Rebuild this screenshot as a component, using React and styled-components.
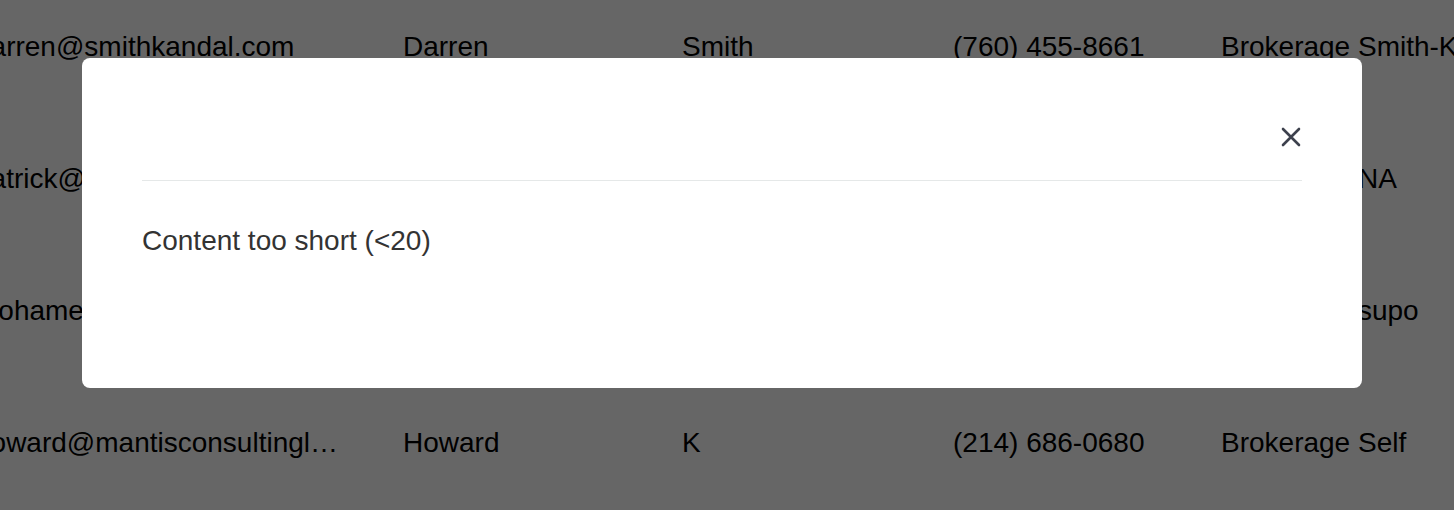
import React from "react";
import styled, { createGlobalStyle } from "styled-components";

const GlobalStyle = createGlobalStyle`
    html, body {
        margin: 0;
        padding: 0;
        background: #ffffff;
        overflow: hidden;
    }
    body {
        font-family: "Liberation Sans", Arial, Helvetica, sans-serif;
    }
`;

const Page = styled.div`
    width: 1454px;
    height: 510px;
    overflow: hidden;
`;

const Table = styled.div`
    display: grid;
    grid-template-columns: 363px 214px 206px 203px 320px;
    grid-auto-rows: 132px;
    column-gap: 65px;
    align-items: center;
    margin: -19px 0 0 -25px;
    color: #000000;
    font-size: 28px;
`;

const Cell = styled.div`
    white-space: nowrap;
    overflow: hidden;
    text-overflow: ${({ $clip }) => ($clip ? "clip" : "ellipsis")};
    margin-right: ${({ $wide }) => ($wide ? "-3px" : "0")};
`;

const Overlay = styled.div`
    position: fixed;
    inset: 0;
    background: rgba(0, 0, 0, 0.6);
    display: flex;
    align-items: flex-start;
    padding: 58px 0 0 82px;
`;

const Modal = styled.div`
    width: 1280px;
    height: 330px;
    box-sizing: border-box;
    background: #ffffff;
    border-radius: 8px;
    padding: 0 60px;
`;

const Header = styled.div`
    display: flex;
    justify-content: flex-end;
    align-items: center;
    padding: 69px 0 33px;
    border-bottom: 1px solid #e5e8e8;
`;

const CloseButton = styled.button`
    display: flex;
    width: 20px;
    height: 20px;
    margin-right: 1px;
    padding: 0;
    border: 0;
    background: none;
    color: #3d414d;
    cursor: pointer;
`;

const Body = styled.div`
    padding-top: 43px;
    font-size: 28px;
    line-height: 1.2;
    color: #333333;
`;

const rows = [
    ["darren@smithkandal.com", "Darren", "Smith", "(760) 455-8661", "Brokerage Smith-Kandal"],
    ["patrick@pmrealtygroup.com", "Patrick", "Morales", "(619) 302-4417", "Brokerage NA"],
    ["mohamed@elmasriproperties.com", "Mohamed", "Elmasri", "(858) 771-2093", "Brokerage  supo"],
    ["howard@mantisconsultinglimited.com", "Howard", "K", "(214) 686-0680", "Brokerage Self"],
];

export default function App() {
    return (
        <Page>
            <GlobalStyle />

            {/* TABLE BEHIND THE DIALOG */}
            <Table>
                {rows.map((row) =>
                    row.map((value, i) => (
                        <Cell key={row[0] + i} $wide={i === 0} $clip={i === 4}>
                            {value}
                        </Cell>
                    ))
                )}
            </Table>

            {/* DIALOG */}
            <Overlay>
                <Modal>
                    <Header>
                        <CloseButton aria-label="Close">
                            <svg width="20" height="20" viewBox="0 0 20 20" fill="none">
                                <path
                                    d="M2 2L18 18M18 2L2 18"
                                    stroke="currentColor"
                                    strokeWidth="2.6"
                                    strokeLinecap="round"
                                />
                            </svg>
                        </CloseButton>
                    </Header>
                    <Body>Content too short (&lt;20)</Body>
                </Modal>
            </Overlay>
        </Page>
    );
}
